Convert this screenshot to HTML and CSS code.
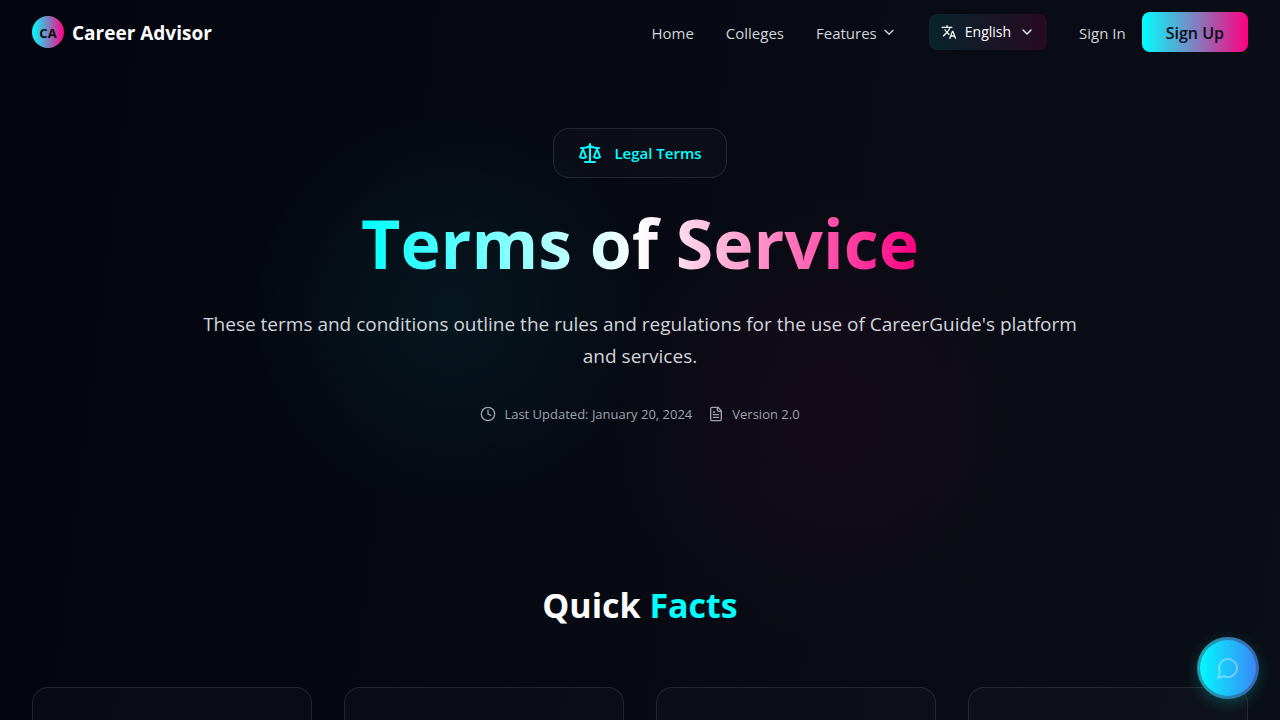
FILE: index.html
```html
<!DOCTYPE html>
<html lang="en">
<head>
<meta charset="utf-8">
<meta name="viewport" content="width=device-width, initial-scale=1">
<title>Terms of Service</title>
<link rel="stylesheet" href="styles.css">
</head>
<body>
<div class="page">
  <header class="topbar">
    <a class="brand" href="#"><span class="brand-mark">CA</span><span class="brand-name">Career Advisor</span></a>
    <nav class="nav">
      <a class="nav-link" href="#">Home</a>
      <a class="nav-link" href="#">Colleges</a>
      <button class="nav-link nav-menu" type="button">Features
        <svg class="icon-sm" viewBox="0 0 24 24" aria-hidden="true"><path d="m6 8 6 6 6-6"/></svg>
      </button>
      <button class="language" type="button">
        <svg class="icon-fill" viewBox="0 0 24 24" aria-hidden="true"><path d="M12.87 15.07l-2.54-2.51.03-.03A17.52 17.52 0 0 0 14.07 6H17V4h-7V2H8v2H1v2h11.17C11.5 7.92 10.44 9.75 9 11.35 8.07 10.32 7.3 9.19 6.69 8h-2c.73 1.63 1.73 3.17 2.98 4.56l-5.09 5.02L4 19l5-5 3.11 3.11.76-2.04zM18.5 10h-2L12 22h2l1.12-3h4.75L21 22h2l-4.5-12zm-2.62 7l1.62-4.33L19.12 17h-3.24z"/></svg>
        <span>English</span>
        <svg class="icon-sm" viewBox="0 0 24 24" aria-hidden="true"><path d="m6 9 6 6 6-6"/></svg>
      </button>
      <div class="account">
        <a class="nav-link" href="#">Sign In</a>
        <a class="signup" href="#">Sign Up</a>
      </div>
    </nav>
  </header>

  <main>
    <section class="hero">
      <div class="orb orb-cyan"></div>
      <div class="orb orb-pink"></div>
      <div class="hero-body">
        <div class="badge">
          <svg class="icon-lg" viewBox="0 0 24 24" aria-hidden="true"><path d="m16 16 3-8 3 8c-.87.65-1.92 1-3 1s-2.13-.35-3-1Z"/><path d="m2 16 3-8 3 8c-.87.65-1.92 1-3 1s-2.13-.35-3-1Z"/><path d="M7 21h10M12 3v18M3 7h2c2 0 5-1 7-2 2 1 5 2 7 2h2"/></svg>
          <span>Legal Terms</span>
        </div>
        <h1 class="title">Terms of Service</h1>
        <p class="lead">These terms and conditions outline the rules and regulations for the use of CareerGuide's platform and services.</p>
        <div class="meta">
          <span class="meta-item">
            <svg class="icon-sm" viewBox="0 0 24 24" aria-hidden="true"><circle cx="12" cy="12" r="10"/><path d="M12 6v6l4 2"/></svg>
            Last Updated: January 20, 2024</span>
          <span class="meta-item">
            <svg class="icon-sm" viewBox="0 0 24 24" aria-hidden="true"><path d="M15 2H6a2 2 0 0 0-2 2v16a2 2 0 0 0 2 2h12a2 2 0 0 0 2-2V7Z"/><path d="M14 2v4a2 2 0 0 0 2 2h4M10 9H8M16 13H8M16 17H8"/></svg>
            Version 2.0</span>
        </div>
      </div>
    </section>

    <section class="facts">
      <h2 class="facts-title">Quick <span class="accent">Facts</span></h2>
      <div class="cards">
        <div class="card"></div>
        <div class="card"></div>
        <div class="card"></div>
        <div class="card"></div>
      </div>
    </section>
  </main>
</div>
<button class="chat" type="button" aria-label="Open chat">
  <svg class="icon-lg" viewBox="0 0 24 24" aria-hidden="true"><path d="M7.900 20A9 9 0 1 0 4 16.100L2 22Z"/></svg>
</button>
</body>
</html>
```
FILE: styles.css
```css
* { box-sizing: border-box; }
body {
  margin: 0;
  font-family: "Segoe UI", "Open Sans", sans-serif;
  font-size: 15px;
  line-height: 24px;
  color: #fff;
  background: #03060f;
}
a { color: inherit; text-decoration: none; }
button { font: inherit; color: inherit; border: 0; background: none; padding: 0; cursor: pointer; }
svg { display: block; flex: none; fill: none; stroke: currentColor; stroke-width: 2; stroke-linecap: round; stroke-linejoin: round; }
.icon-sm { width: 16px; height: 16px; }
.icon-lg { width: 24px; height: 24px; }
.icon-fill { width: 16px; height: 16px; fill: currentColor; stroke: none; }

.page {
  height: 100vh;
  overflow: hidden;
  background: linear-gradient(97deg, #03060f, #0b0e16);
}

.topbar {
  position: relative;
  z-index: 1;
  display: flex;
  align-items: center;
  justify-content: space-between;
  height: 64px;
  padding: 0 32px;
}
.brand { display: flex; align-items: center; gap: 8px; }
.brand-mark {
  display: grid;
  place-items: center;
  width: 32px;
  height: 32px;
  padding-top: 2px;
  border-radius: 50%;
  background: linear-gradient(90deg, #00ffff, #ff0080);
  color: #0a0d15;
  font-size: 13px;
  font-weight: 700;
}
.brand-name { padding-top: 2px; font-size: 19px; line-height: 28px; font-weight: 700; }
.nav { display: flex; align-items: center; gap: 32px; }
.nav-link { padding-top: 2px; color: #d1d5db; }
.nav-menu { display: flex; align-items: center; gap: 4px; }
.language {
  display: flex;
  align-items: center;
  gap: 8px;
  padding: 8px 12px;
  border-radius: 8px;
  background: linear-gradient(90deg, rgba(0, 255, 255, .1), rgba(255, 0, 128, .12));
  font-size: 14px;
  line-height: 20px;
}
.account { display: flex; align-items: center; gap: 16px; }
.signup {
  padding: 9px 24px 7px;
  border-radius: 8px;
  background: linear-gradient(90deg, #00ffff, #ff0080);
  color: #0a0d15;
  font-size: 16px;
  font-weight: 600;
}

.hero { position: relative; padding: 64px 32px 96px; }
.orb { position: absolute; border-radius: 50%; }
.orb-cyan {
  left: calc(50% - 392px);
  top: 46px;
  width: 400px;
  height: 400px;
  background: radial-gradient(closest-side, rgba(0, 255, 255, .055), rgba(0, 255, 255, .035) 40%, rgba(0, 255, 255, .01) 75%, transparent);
}
.orb-pink {
  left: calc(50% - 38px);
  top: 124px;
  width: 460px;
  height: 460px;
  background: radial-gradient(closest-side, rgba(255, 0, 128, .05), rgba(255, 0, 128, .035) 40%, rgba(255, 0, 128, .01) 75%, transparent);
}
.hero-body {
  position: relative;
  display: flex;
  flex-direction: column;
  align-items: center;
  max-width: 896px;
  margin: 0 auto;
  text-align: center;
}
.badge {
  display: flex;
  align-items: center;
  gap: 12px;
  padding: 12px 24px;
  border: 1px solid rgba(255, 255, 255, .1);
  border-radius: 16px;
  background: rgba(255, 255, 255, .02);
  color: #00ffff;
  font-weight: 600;
}
.title {
  margin: 20px 0;
  font-size: 68px;
  line-height: 90px;
  font-weight: 700;
  color: transparent;
  background: linear-gradient(90deg, #00ffff, #fff, #ff0080);
  background-clip: text;
  -webkit-background-clip: text;
}
.lead { margin: 0 0 32px; font-size: 19px; line-height: 32px; color: #d1d5db; }
.meta { display: flex; gap: 16px; font-size: 13px; line-height: 20px; color: #9ca3af; }
.meta-item { display: flex; align-items: center; gap: 8px; }

.facts { position: relative; padding: 65px 32px; }
.facts-title { margin: 0 0 62px; font-size: 34px; line-height: 40px; font-weight: 700; text-align: center; }
.accent { color: #00ffff; }
.cards { display: grid; grid-template-columns: repeat(4, 1fr); gap: 32px; }
.card {
  min-height: 200px;
  border: 1px solid rgba(255, 255, 255, .1);
  border-radius: 16px;
  background: rgba(255, 255, 255, .02);
}

.chat {
  position: fixed;
  right: 21px;
  bottom: 21px;
  display: grid;
  place-items: center;
  width: 62px;
  height: 62px;
  border-radius: 50%;
  border: 3px solid rgba(60, 70, 100, .5);
  background: linear-gradient(90deg, #00ffff, #3b82f6) border-box;
  box-shadow: 0 4px 14px rgba(0, 255, 255, .22);
  color: rgba(255, 255, 255, .35);
}
```
